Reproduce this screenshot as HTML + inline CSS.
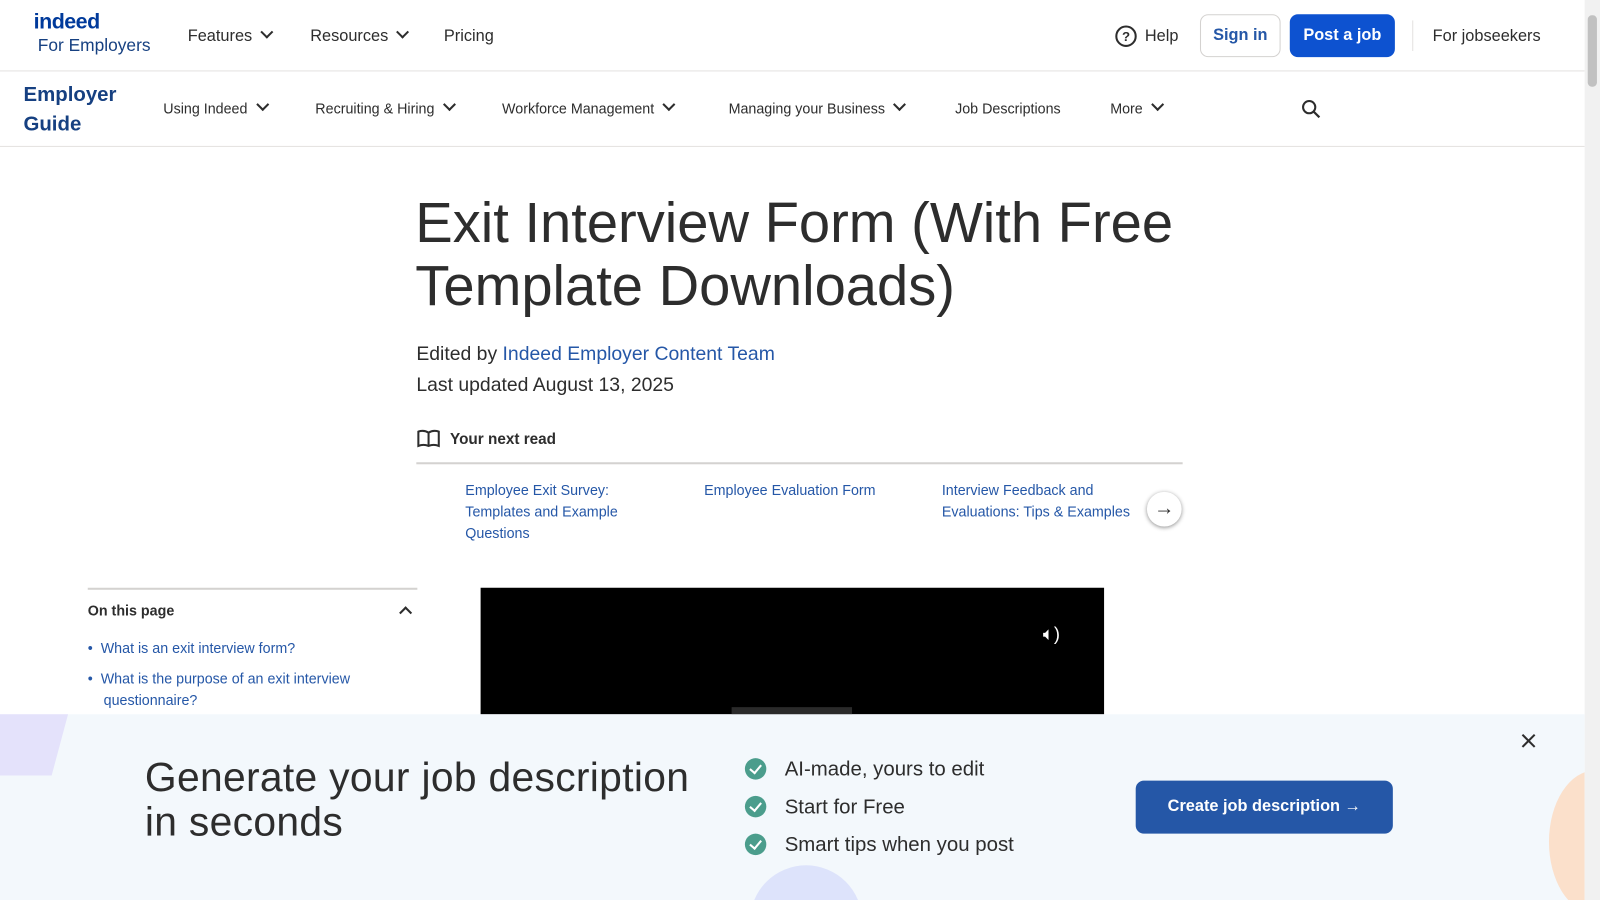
<!DOCTYPE html>
<html><head><meta charset="utf-8"><style>
html,body{margin:0;padding:0;width:1600px;height:900px;overflow:hidden;background:#fff}
#w{position:absolute;left:0;top:0;width:1568px;height:882px;transform:scale(1.0204);transform-origin:0 0;font-family:"Liberation Sans",sans-serif;color:#2d2d2d;overflow:hidden}
.a{position:absolute;white-space:nowrap}
.chev{display:inline-block;width:7px;height:7px;border-right:2px solid #2d2d2d;border-bottom:2px solid #2d2d2d;transform:rotate(45deg);margin-left:10px;position:relative;top:-4px}
.n1{font-size:16px;top:26px}
.n2{font-size:14px;top:98px}
.lk{color:#2557a7}
.sl{font-size:14px;line-height:21px;color:#2557a7;white-space:normal}
.ck{position:absolute;width:21px;height:21px;border-radius:50%;background:#4b9d8c;left:730px}
.ck:after{content:"";position:absolute;left:7px;top:4px;width:5px;height:9px;border-right:2px solid #fff;border-bottom:2px solid #fff;transform:rotate(40deg)}
.ct{font-size:20px;left:769px}
</style></head><body><div id="w">
<div class="a" style="left:33px;top:10px;font-size:21px;font-weight:bold;color:#003a9b;letter-spacing:-0.5px">indeed</div>
<div class="a" style="left:37px;top:35px;font-size:17px;color:#164081">For Employers</div>
<div class="a n1" style="left:184px;top:27px">Features<span class="chev"></span></div>
<div class="a n1" style="left:304px;top:27px">Resources<span class="chev"></span></div>
<div class="a n1" style="left:435px;top:27px">Pricing</div>
<div class="a" style="left:1093px;top:25px;width:17px;height:17px;border:2px solid #2d2d2d;border-radius:50%;font-size:13px;font-weight:bold;text-align:center;line-height:17px">?</div>
<div class="a n1" style="left:1122px;top:27px">Help</div>
<div class="a" style="left:1176px;top:14px;width:77px;height:40px;border:1px solid #d4d2d0;border-radius:8px;text-align:center;line-height:40px;font-size:16px;font-weight:bold;color:#2557a7">Sign in</div>
<div class="a" style="left:1264px;top:14px;width:103px;height:42px;background:#0d52d0;border-radius:8px;text-align:center;line-height:42px;font-size:16px;font-weight:bold;color:#fff">Post a job</div>
<div class="a" style="left:1384px;top:20px;width:1px;height:30px;background:#e4e2e0"></div>
<div class="a n1" style="left:1404px;top:27px">For jobseekers</div>
<div class="a" style="left:0;top:69px;width:1553px;height:1px;background:#e4e2e0"></div>
<div class="a" style="left:23px;top:79px;font-size:20px;line-height:29px;font-weight:bold;color:#164081">Employer<br>Guide</div>
<div class="a n2" style="left:160px">Using Indeed<span class="chev"></span></div>
<div class="a n2" style="left:309px">Recruiting &amp; Hiring<span class="chev"></span></div>
<div class="a n2" style="left:492px">Workforce Management<span class="chev"></span></div>
<div class="a n2" style="left:714px">Managing your Business<span class="chev"></span></div>
<div class="a n2" style="left:936px">Job Descriptions</div>
<div class="a n2" style="left:1088px">More<span class="chev"></span></div>
<svg class="a" style="left:1275px;top:97px" width="20" height="20" viewBox="0 0 20 20"><circle cx="8" cy="8" r="6" fill="none" stroke="#2d2d2d" stroke-width="2"/><path d="M12.5 12.5 L18 18" stroke="#2d2d2d" stroke-width="2.2"/></svg>
<div class="a" style="left:0;top:143px;width:1553px;height:1px;background:#e4e2e0"></div>
<div class="a" style="left:407px;top:187px;font-size:55px;line-height:62px;font-weight:300;color:#2d2d2d;letter-spacing:0">Exit Interview Form (With Free<br>Template Downloads)</div>
<div class="a" style="left:408px;top:337px;font-size:19px">Edited by <span class="lk">Indeed Employer Content Team</span></div>
<div class="a" style="left:408px;top:367px;font-size:19px">Last updated August 13, 2025</div>
<svg class="a" style="left:408px;top:421px" width="24" height="18" viewBox="0 0 24 18"><path d="M2 2 Q7 0 12 3 Q17 0 22 2 V16 Q17 14 12 16 Q7 14 2 16 Z M12 3 V16" fill="none" stroke="#2d2d2d" stroke-width="2"/></svg>
<div class="a" style="left:441px;top:422px;font-size:15px;font-weight:bold">Your next read</div>
<div class="a" style="left:408px;top:453px;width:751px;height:2px;background:#d4d2d0"></div>
<div class="a sl" style="left:456px;top:470px;width:190px">Employee Exit Survey: Templates and Example Questions</div>
<div class="a sl" style="left:690px;top:470px;width:200px">Employee Evaluation Form</div>
<div class="a sl" style="left:923px;top:470px;width:200px">Interview Feedback and Evaluations: Tips &amp; Examples</div>
<div class="a" style="left:1124px;top:482px;width:34px;height:34px;border-radius:50%;background:#fff;box-shadow:0 1px 4px rgba(0,0,0,.45);text-align:center;line-height:33px;font-size:20px;font-weight:bold">→</div>
<div class="a" style="left:86px;top:576px;width:323px;height:2px;background:#d4d2d0"></div>
<div class="a" style="left:86px;top:590px;font-size:14px;font-weight:bold">On this page</div>
<div class="a" style="left:393px;top:596px;width:7px;height:7px;border-left:2px solid #2d2d2d;border-top:2px solid #2d2d2d;transform:rotate(45deg)"></div>
<div class="a sl" style="left:86px;top:625px;width:300px">•&nbsp;&nbsp;What is an exit interview form?</div>
<div class="a sl" style="left:86px;top:655px;width:300px">•&nbsp;&nbsp;What is the purpose of an exit interview<br>&nbsp;&nbsp;&nbsp;&nbsp;questionnaire?</div>
<div class="a" style="left:471px;top:576px;width:611px;height:124px;background:#000"></div>
<div class="a" style="left:717px;top:693px;width:118px;height:7px;background:#2a2a2a"></div>
<div class="a" style="left:1022px;top:611px;color:#fff;font-size:18px">🔈︎)</div>
<div class="a" style="left:0;top:700px;width:1553px;height:182px;background:#f3f8fc;overflow:hidden">
<div class="a" style="left:-30px;top:-10px;width:90px;height:70px;background:#e4e2fb;transform:skewX(-15deg)"></div>
<div class="a" style="left:735px;top:148px;width:110px;height:110px;border-radius:50%;background:#dde3fb"></div>
<div class="a" style="left:1518px;top:55px;width:90px;height:140px;border-radius:50%;background:#fbe0cb"></div>
</div>
<div class="a" style="left:142px;top:740px;font-size:40px;line-height:44px;font-weight:300;letter-spacing:0.3px">Generate your job description<br>in seconds</div>
<div class="ck" style="top:743px"></div><div class="a ct" style="top:743px">AI-made, yours to edit</div>
<div class="ck" style="top:780px"></div><div class="a ct" style="top:780px">Start for Free</div>
<div class="ck" style="top:817px"></div><div class="a ct" style="top:817px">Smart tips when you post</div>
<div class="a" style="left:1113px;top:765px;width:252px;height:52px;background:#2557a7;border-radius:8px;color:#fff;font-size:16px;font-weight:bold;text-align:center;line-height:52px">Create job description →</div>
<svg class="a" style="left:1490px;top:718px" width="16" height="16" viewBox="0 0 16 16"><path d="M2 2L14 14M14 2L2 14" stroke="#2d2d2d" stroke-width="2"/></svg>
<div class="a" style="left:1553px;top:0;width:15px;height:882px;background:#f1f1f1"></div>
<div class="a" style="left:1556px;top:15px;width:9px;height:70px;background:#c1c1c1;border-radius:4px"></div>
</div></body></html>
